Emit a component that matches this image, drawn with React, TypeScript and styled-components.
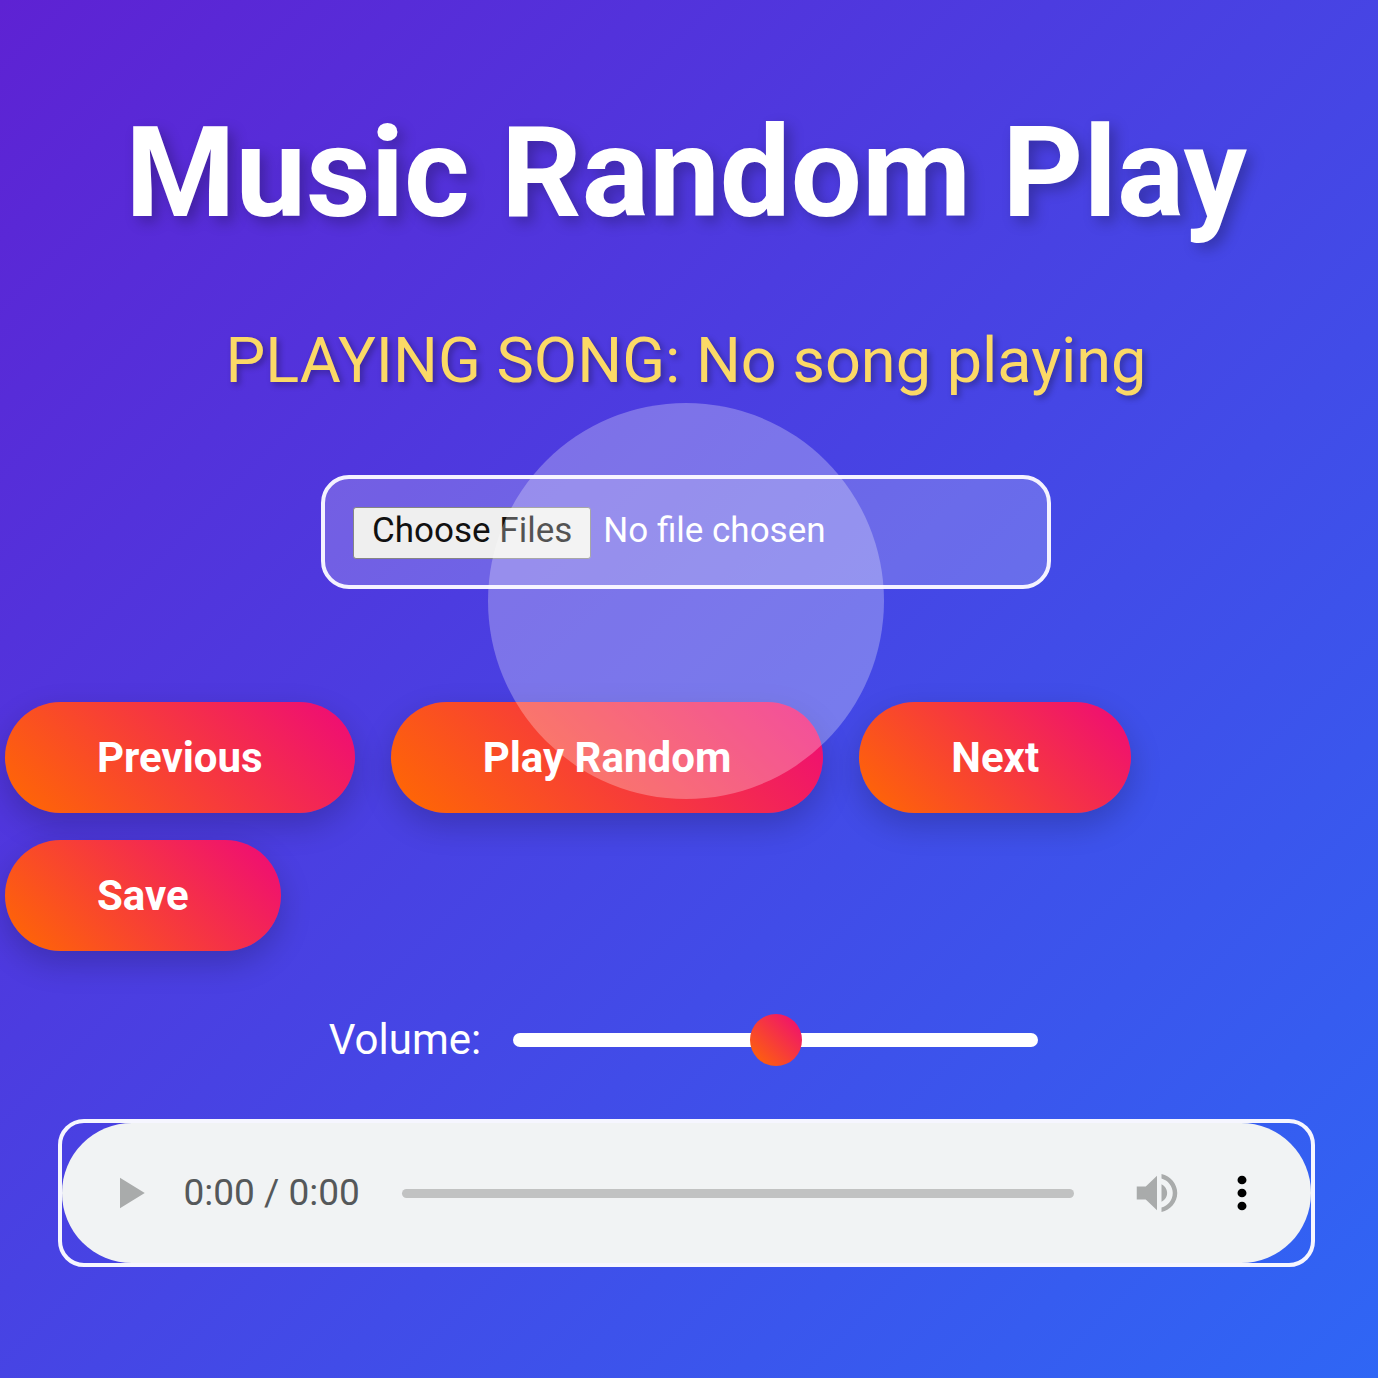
import React, { useState } from "react";
import styled, { createGlobalStyle } from "styled-components";

const GlobalStyle = createGlobalStyle`
  *, *::before, *::after { box-sizing: border-box; }
  body { margin: 0; font-family: Roboto, "Liberation Sans", sans-serif; }
  button, input { font-family: inherit; margin: 0; }
`;

const accent = "linear-gradient(45deg, #ff6a00, #ee0979)";

const Page = styled.main`
  position: relative;
  display: flex;
  flex-direction: column;
  align-items: center;
  min-height: 100vh;
  padding: 99px 6px 98px 0;
  color: #fff;
  background: linear-gradient(135deg, #5e22d3, #2f66f5);
`;

const Title = styled.h1`
  margin: 0 0 77px;
  font-size: 126px;
  line-height: 148px;
  font-weight: 700;
  text-align: center;
  text-shadow: 6px 6px 14px rgba(0, 0, 0, 0.25);
`;

const NowPlaying = styled.p`
  margin: 0 0 77px;
  font-size: 63px;
  line-height: 74px;
  text-align: center;
  color: #fbd966;
  text-shadow: 3px 3px 6px rgba(0, 0, 0, 0.3);
`;

const FilePicker = styled.input`
  width: 730px;
  max-width: 100%;
  height: 114px;
  margin-bottom: 113px;
  padding: 28px;
  border: 4px solid #f4f2ff;
  border-radius: 28px;
  background: rgba(255, 255, 255, 0.2);
  color: #fff;
  font-size: 35px;

  &::file-selector-button {
    height: 52px;
    margin: 0 12px 0 0;
    padding: 0 18px 4px;
    border: 1px solid #858585;
    border-radius: 3px;
    background: #efefef;
    color: #111;
    font-family: inherit;
    font-size: 35px;
    line-height: 46px;
  }
`;

const Controls = styled.div`
  display: flex;
  flex-wrap: wrap;
  align-self: stretch;
  gap: 27px 36px;
  margin-bottom: 63px;
  padding-left: 5px;
`;

const PillButton = styled.button`
  height: 111px;
  padding: 0 92px;
  border: 0;
  border-radius: 56px;
  background: ${accent};
  box-shadow: 0 12px 32px rgba(0, 0, 0, 0.2);
  color: #fff;
  font-size: 42px;
  font-weight: 700;
`;

const VolumeRow = styled.div`
  display: flex;
  align-items: center;
  gap: 32px;
  height: 52px;
  margin-bottom: 53px;
  padding-right: 5px;
`;

const VolumeLabel = styled.label`
  font-size: 42px;
  line-height: 50px;
`;

const VolumeSlider = styled.input`
  appearance: none;
  width: 525px;
  height: 14px;
  border-radius: 7px;
  background: #fff;

  &::-webkit-slider-thumb {
    appearance: none;
    width: 52px;
    height: 52px;
    border-radius: 50%;
    background: ${accent};
  }
`;

const Player = styled.section`
  width: calc(100% - 115px);
  border: 4px solid #f6f6ff;
  border-radius: 26px;
`;

const PlayerBar = styled.div`
  display: flex;
  align-items: center;
  height: 140px;
  padding: 0 42px 0 40px;
  border-radius: 70px;
  background: #f1f3f4;
`;

const IconButton = styled.button<{ $color: string }>`
  display: flex;
  padding: 0;
  border: 0;
  background: none;
  color: ${(p) => p.$color};

  svg {
    width: 54px;
    height: 52px;
    fill: currentColor;
  }
`;

const Time = styled.span`
  margin: 0 42px 0 28px;
  color: #55585a;
  font-size: 37px;
  line-height: 42px;
  white-space: nowrap;
`;

const SeekBar = styled.input`
  appearance: none;
  flex: 1;
  min-width: 0;
  height: 9px;
  margin-right: 56px;
  border-radius: 5px;
  background: #c1c2c2;

  &::-webkit-slider-thumb {
    appearance: none;
    width: 0;
    height: 0;
  }
`;

const MoreSlot = styled.div`
  margin-left: 31px;
`;

const TouchRipple = styled.div`
  position: absolute;
  top: 403px;
  left: calc(50% - 201px);
  width: 396px;
  height: 396px;
  border-radius: 50%;
  background: rgba(255, 255, 255, 0.28);
  pointer-events: none;
`;

const actions = ["Previous", "Play Random", "Next", "Save"];

export default function App() {
  const [volume, setVolume] = useState(50);

  return (
    <>
      <GlobalStyle />
      <Page>
        <Title>Music Random Play</Title>
        <NowPlaying>PLAYING SONG: No song playing</NowPlaying>
        <FilePicker type="file" accept="audio/*" multiple aria-label="Songs" />
        <Controls>
          {actions.map((name) => (
            <PillButton key={name} type="button">
              {name}
            </PillButton>
          ))}
        </Controls>
        <VolumeRow>
          <VolumeLabel htmlFor="volume">Volume:</VolumeLabel>
          <VolumeSlider
            id="volume"
            type="range"
            min={0}
            max={100}
            value={volume}
            onChange={(e) => setVolume(Number(e.target.value))}
          />
        </VolumeRow>
        <Player aria-label="Audio player">
          <PlayerBar>
            <IconButton type="button" aria-label="Play" $color="#a9abab">
              <svg viewBox="0 0 24 24" preserveAspectRatio="none">
                <path d="M8 5v14l11-7z" />
              </svg>
            </IconButton>
            <Time>0:00 / 0:00</Time>
            <SeekBar type="range" min={0} max={100} defaultValue={0} aria-label="Seek" />
            <IconButton type="button" aria-label="Mute" $color="#a9abab">
              <svg viewBox="0 0 24 24" preserveAspectRatio="none">
                <path d="M3 9v6h4l5 5V4L7 9H3zm13.5 3c0-1.77-1.02-3.29-2.5-4.03v8.05c1.48-.73 2.5-2.25 2.5-4.02zM14 3.23v2.06c2.89.86 5 3.54 5 6.71s-2.11 5.85-5 6.71v2.06c4.01-.91 7-4.49 7-8.77s-2.99-7.86-7-8.77z" />
              </svg>
            </IconButton>
            <MoreSlot>
              <IconButton type="button" aria-label="More options" $color="#000">
                <svg viewBox="0 0 24 24" preserveAspectRatio="none">
                  <path d="M12 8c1.1 0 2-.9 2-2s-.9-2-2-2-2 .9-2 2 .9 2 2 2zm0 2c-1.1 0-2 .9-2 2s.9 2 2 2 2-.9 2-2-.9-2-2-2zm0 6c-1.1 0-2 .9-2 2s.9 2 2 2 2-.9 2-2-.9-2-2-2z" />
                </svg>
              </IconButton>
            </MoreSlot>
          </PlayerBar>
        </Player>
        <TouchRipple />
      </Page>
    </>
  );
}
